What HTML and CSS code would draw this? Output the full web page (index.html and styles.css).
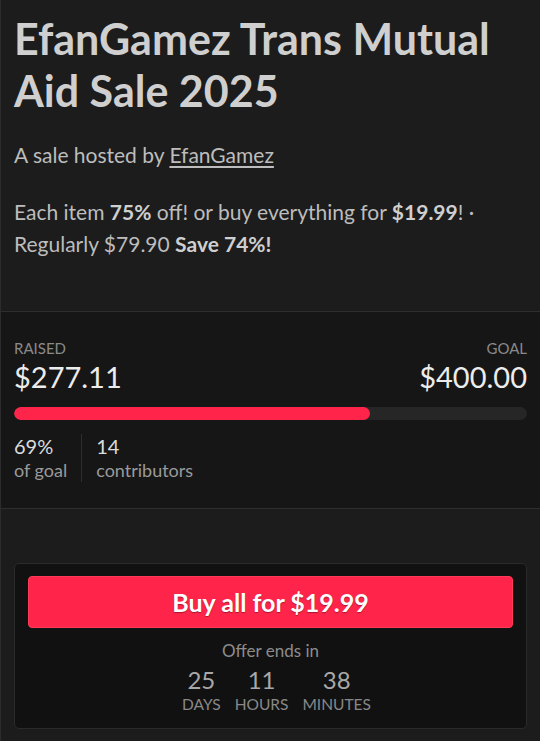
FILE: index.html
```html
<!DOCTYPE html>
<html lang="en">
<head>
<meta charset="utf-8">
<title>EfanGamez Trans Mutual Aid Sale 2025</title>
<link rel="stylesheet" href="styles.css">
</head>
<body>
<div class="page">
  <section class="intro">
    <h1 class="title">EfanGamez Trans Mutual Aid Sale 2025</h1>
    <p class="host">A sale hosted by <a class="host-link" href="#">EfanGamez</a></p>
    <p class="deal">Each item <strong>75%</strong> off! or buy everything for <strong>$19.99</strong>! · Regularly $79.90 <strong>Save 74%!</strong></p>
  </section>
  <section class="stats">
    <div class="stat-head">
      <div class="stat-col">
        <div class="stat-label">Raised</div>
        <div class="stat-amount">$277.11</div>
      </div>
      <div class="stat-col stat-right">
        <div class="stat-label">Goal</div>
        <div class="stat-amount">$400.00</div>
      </div>
    </div>
    <div class="bar"><div class="bar-fill" style="width:69.3%"></div></div>
    <div class="stat-foot">
      <div class="foot-item">
        <div class="foot-num">69%</div>
        <div class="foot-text">of goal</div>
      </div>
      <div class="foot-item foot-second">
        <div class="foot-num">14</div>
        <div class="foot-text">contributors</div>
      </div>
    </div>
  </section>
  <section class="buy">
    <div class="card">
      <button class="buy-btn" type="button">Buy all for $19.99</button>
      <div class="offer">Offer ends in</div>
      <div class="countdown">
        <div class="unit"><div class="unit-num">25</div><div class="unit-label">Days</div></div>
        <div class="unit"><div class="unit-num">11</div><div class="unit-label">Hours</div></div>
        <div class="unit"><div class="unit-num">38</div><div class="unit-label">Minutes</div></div>
      </div>
    </div>
  </section>
</div>
</body>
</html>
```
FILE: styles.css
```css
html, body {
  margin: 0;
  padding: 0;
  background: #1c1c1c;
}
body {
  font-family: Lato, "Open Sans", sans-serif;
  color: #bdbdbd;
}
.page {
  border-left: 1px solid #2c2c2c;
  min-height: 741px;
  box-sizing: border-box;
}
.intro {
  padding: 13px 13px 51px 13px;
  background: #1c1c1c;
}
.title {
  margin: 0;
  font-size: 43px;
  line-height: 52px;
  font-weight: 700;
  color: #cfcfcf;
}
.host {
  margin: 22px 0 0 0;
  font-size: 21px;
  line-height: 32px;
}
.host-link {
  color: #bdbdbd;
  text-decoration: underline;
  text-underline-offset: 3px;
}
.deal {
  margin: 25px 0 0 0;
  font-size: 21px;
  line-height: 32px;
}
.deal strong {
  font-weight: 700;
  color: #cfcfcf;
}
.stats {
  background: #161616;
  border-top: 1px solid #2e2e2e;
  border-bottom: 1px solid #2e2e2e;
  padding: 27px 13px 26px 13px;
}
.stat-head {
  display: flex;
  justify-content: space-between;
}
.stat-right {
  text-align: right;
}
.stat-label {
  font-size: 15px;
  line-height: 18px;
  text-transform: uppercase;
  color: #8a8a8a;
}
.stat-amount {
  margin-top: 3px;
  font-size: 29px;
  line-height: 34px;
  color: #ececec;
}
.bar {
  margin-top: 13px;
  height: 13px;
  border-radius: 7px;
  background: #262626;
  overflow: hidden;
}
.bar-fill {
  height: 100%;
  border-radius: 7px;
  background: #ff2449;
}
.stat-foot {
  display: flex;
  margin-top: 14px;
}
.foot-item {
  padding-right: 14px;
}
.foot-second {
  border-left: 1px solid #2e2e2e;
  padding-left: 14px;
}
.foot-num {
  font-size: 20px;
  line-height: 24px;
  color: #dcdcdc;
}
.foot-text {
  font-size: 18px;
  line-height: 24px;
  color: #9a9a9a;
}
.buy {
  padding: 54px 13px 15px 13px;
}
.card {
  background: #111111;
  border: 1px solid #2a2a2a;
  border-radius: 5px;
  padding: 12px 13px 15px 13px;
  text-align: center;
}
.buy-btn {
  display: block;
  width: 100%;
  height: 52px;
  border: 1px solid #ff3a5a;
  border-radius: 4px;
  background: #ff2449;
  color: #ffffff;
  font-family: Lato, "Open Sans", sans-serif;
  font-size: 25px;
  font-weight: 700;
  text-shadow: 0 1px 1px rgba(0, 0, 0, 0.35);
  cursor: pointer;
}
.offer {
  margin-top: 12px;
  font-size: 17px;
  line-height: 22px;
  color: #8c8c8c;
}
.countdown {
  display: flex;
  justify-content: center;
  gap: 14px;
  margin-top: 5px;
  padding-left: 12px;
}
.unit-num {
  font-size: 24px;
  line-height: 26px;
  color: #a8a8a8;
}
.unit-label {
  margin-top: 2px;
  font-size: 15.5px;
  line-height: 18px;
  text-transform: uppercase;
  color: #888888;
}
```
